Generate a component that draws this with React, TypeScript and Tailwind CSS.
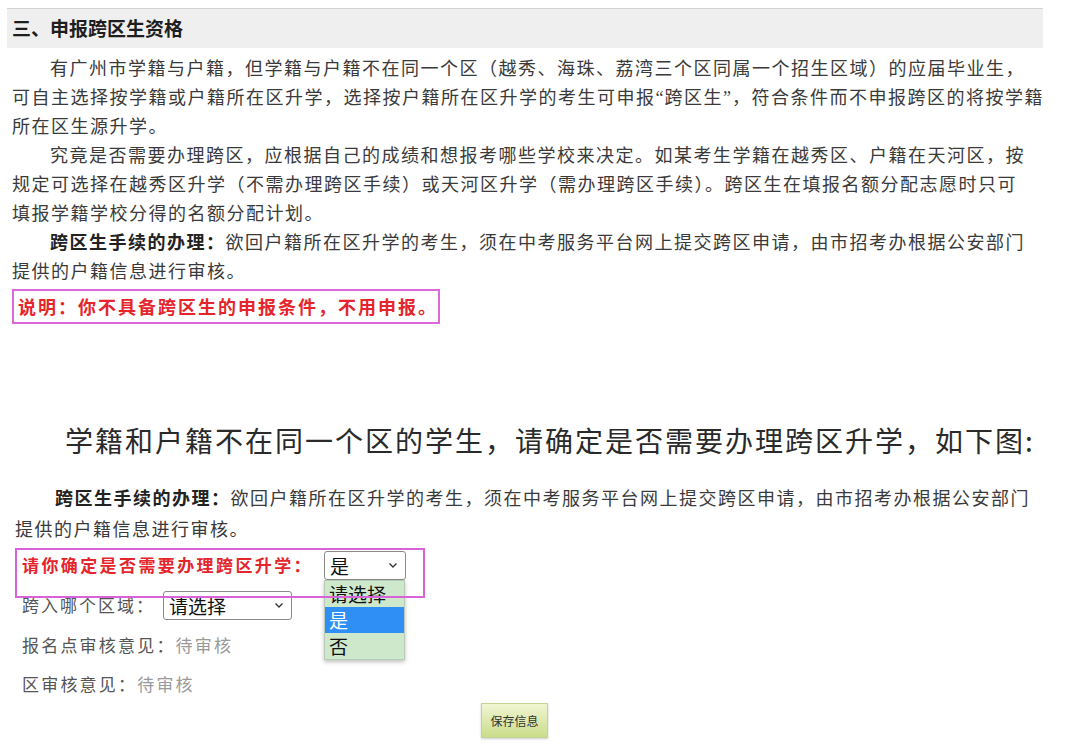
import React from 'react';

const Q = ({ c }: { c: string }) => (
  <span className="tracking-[1px] leading-none" style={{ fontFamily: '"Liberation Serif", serif' }}>{c}</span>
);

const paraLines: { indent: boolean; text: React.ReactNode }[] = [
  { indent: true, text: '有广州市学籍与户籍，但学籍与户籍不在同一个区（越秀、海珠、荔湾三个区同属一个招生区域）的应届毕业生，' },
  {
    indent: false,
    text: (
      <>
        可自主选择按学籍或户籍所在区升学，选择按户籍所在区升学的考生可申报<Q c="“" />跨区生<Q c="”" />，符合条件而不申报跨区的将按学籍
      </>
    ),
  },
  { indent: false, text: '所在区生源升学。' },
  { indent: true, text: '究竟是否需要办理跨区，应根据自己的成绩和想报考哪些学校来决定。如某考生学籍在越秀区、户籍在天河区，按' },
  { indent: false, text: '规定可选择在越秀区升学（不需办理跨区手续）或天河区升学（需办理跨区手续）。跨区生在填报名额分配志愿时只可' },
  { indent: false, text: '填报学籍学校分得的名额分配计划。' },
];

function Chevron() {
  return (
    <svg width="10" height="7" viewBox="0 0 10 7" className="shrink-0">
      <path d="M1.5 1.5 L5 5 L8.5 1.5" fill="none" stroke="#333" strokeWidth="1.3" />
    </svg>
  );
}

function FakeSelect({ value, width, open }: { value: string; width: string; open?: boolean }) {
  return (
    <div className={`relative h-[29px] ${width}`}>
      <div className="h-full w-full flex items-center justify-between pl-[5px] pr-[7px] bg-white border border-[#8a8a8a] rounded-[3px] text-[19px] text-[#111] tracking-normal">
        <span className="leading-none">{value}</span>
        <Chevron />
      </div>
      {open && (
        <ul className="absolute left-0 top-full w-[81px] bg-[#cde8cb] shadow-[0_2px_4px_rgba(0,0,0,0.25)] border border-[#b9c9b8] text-[19px] text-[#111] leading-[26px] tracking-normal">
          <li className="pl-[4px] h-[26px]">请选择</li>
          <li className="pl-[4px] h-[26px] bg-[#2f8ff4] text-white">是</li>
          <li className="pl-[4px] h-[26px]">否</li>
        </ul>
      )}
    </div>
  );
}

export default function App() {
  return (
    <div
      className="w-[1080px] h-[753px] bg-white overflow-hidden text-[#3a3a3a]"
      style={{ fontFamily: '"Noto Sans CJK SC", "Noto Sans", sans-serif' }}
    >
      {/* 标题栏 */}
      <header className="mt-[8px] ml-[7px] w-[1036px] h-[40px] bg-[#efefef] border-t border-[#d2d2d2] flex items-center pl-[5px]">
        <h2 className="text-[19px] font-bold text-[#1e1e1e]">三、申报跨区生资格</h2>
      </header>

      {/* 说明段落 */}
      <section className="mt-[5px] px-[12px] text-[18px] tracking-[1.5px] leading-[29px]">
        {paraLines.map((l, i) => (
          <p key={i} className={`h-[29px] whitespace-nowrap ${l.indent ? 'pl-[38px]' : ''}`}>
            {l.text}
          </p>
        ))}
        <p className="h-[29px] whitespace-nowrap pl-[38px]">
          <b className="text-[#222]">跨区生手续的办理：</b>欲回户籍所在区升学的考生，须在中考服务平台网上提交跨区申请，由市招考办根据公安部门
        </p>
        <p className="h-[29px] whitespace-nowrap">提供的户籍信息进行审核。</p>
      </section>

      <div className="mt-[4px] ml-[12px] w-[428px] h-[35px] border-2 border-[#dc68dc] flex items-center pl-[4px]">
        <span className="text-[18px] font-bold tracking-[2px] text-[#e4252b] whitespace-nowrap">说明：你不具备跨区生的申报条件，不用申报。</span>
      </div>

      {/* 中间提示 */}
      <p className="mt-[96px] pl-[65px] h-[40px] leading-[40px] text-[28px] tracking-[2px] text-[#2a2a2a] whitespace-nowrap">
        学籍和户籍不在同一个区的学生，请确定是否需要办理跨区升学，如下图:
      </p>

      {/* 截图部分 */}
      <section className="mt-[22px] text-[18px] tracking-[1.5px] leading-[31px] pl-[15px]">
        <p className="h-[31px] whitespace-nowrap pl-[40px]">
          <b className="text-[#222]">跨区生手续的办理：</b>欲回户籍所在区升学的考生，须在中考服务平台网上提交跨区申请，由市招考办根据公安部门
        </p>
        <p className="h-[31px] whitespace-nowrap">提供的户籍信息进行审核。</p>
      </section>

      <div className="relative mt-[1px]">
        <div className="h-[40px] flex items-center pl-[22px]">
          <span className="w-[302px] text-[17px] font-bold tracking-[2.4px] text-[#e4252b] whitespace-nowrap">请你确定是否需要办理跨区升学：</span>
          <FakeSelect value="是" width="w-[82px]" open />
        </div>
        <div className="h-[40px] flex items-center pl-[22px] text-[17px] tracking-[2px] text-[#555]">
          <span className="w-[141px] whitespace-nowrap">跨入哪个区域：</span>
          <FakeSelect value="请选择" width="w-[129px]" />
        </div>
        <div className="h-[40px] flex items-center pl-[22px] text-[17px] tracking-[2.2px] text-[#555] whitespace-nowrap">
          报名点审核意见：<span className="text-[#9a9a9a]">待审核</span>
        </div>
        <div className="h-[38px] flex items-center pl-[22px] text-[17px] tracking-[2.2px] text-[#555] whitespace-nowrap">
          区审核意见：<span className="text-[#9a9a9a]">待审核</span>
        </div>

        {/* 标注框 */}
        <div className="absolute left-[15px] top-[3px] w-[410px] h-[50px] border-2 border-[#d863d8] pointer-events-none" />
      </div>

      <button className="ml-[481px] w-[67px] h-[35px] border border-[#c3d295] bg-gradient-to-b from-[#f1f5d2] to-[#cadd8a] text-[12px] text-[#333] shadow-[0_1px_2px_rgba(0,0,0,0.2)]">
        保存信息
      </button>
    </div>
  );
}
